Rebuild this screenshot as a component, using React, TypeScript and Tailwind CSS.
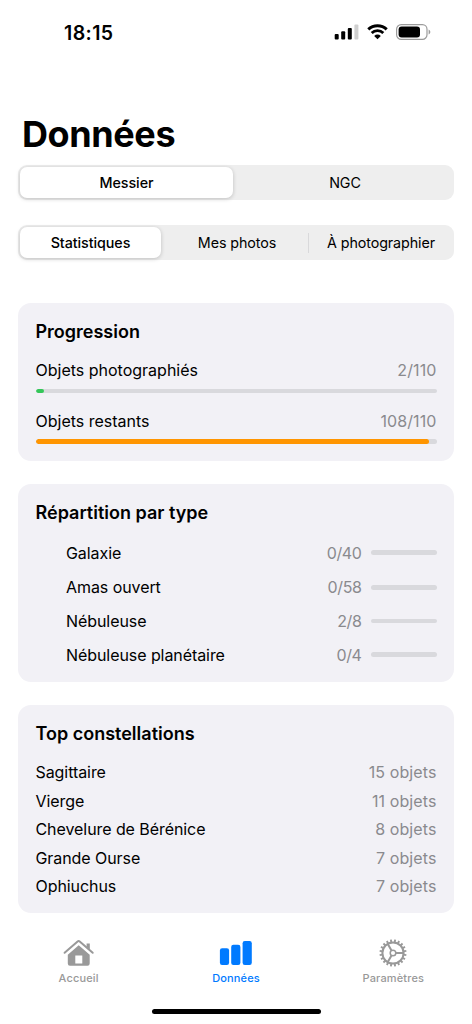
import { useState } from 'react';
import type { ReactNode } from 'react';
import clsx from 'clsx';

const CATALOGS = ['Messier', 'NGC'];

const VIEWS = ['Statistiques', 'Mes photos', 'À photographier'];

const TYPES = [
  { name: 'Galaxie', count: '0/40', row: 'h-[35px]' },
  { name: 'Amas ouvert', count: '0/58', row: 'h-[34.5px]' },
  { name: 'Nébuleuse', count: '2/8', row: 'h-[33px]' },
  { name: 'Nébuleuse planétaire', count: '0/4', row: 'h-[34px]' },
];

const CONSTELLATIONS = [
  { name: 'Sagittaire', total: 15 },
  { name: 'Vierge', total: 11 },
  { name: 'Chevelure de Bérénice', total: 8 },
  { name: 'Grande Ourse', total: 7 },
  { name: 'Ophiuchus', total: 7 },
];

/** 20 gear teeth, one every 18 degrees */
const TEETH = Array.from({ length: 20 }, (_, i) => i * 18);

function SignalIcon() {
  return (
    <svg width="25" height="16" viewBox="0 0 25 16">
      <rect x="0.7" y="9.9" width="4" height="5.6" rx="1" />
      <rect x="7.2" y="7.2" width="4" height="8.3" rx="1" />
      <rect x="13.8" y="4" width="4" height="11.5" rx="1" />
      <rect x="20.4" y="0.5" width="4" height="15" rx="1" fill="#cfcfcf" />
    </svg>
  );
}

function WifiIcon() {
  return (
    <svg width="21" height="16" viewBox="0 0 21 16" fill="none" stroke="black">
      <path d="M1.3 5.4A13.2 13.2 0 0 1 19.7 5.4" strokeWidth="3" />
      <path d="M4.7 9A8.2 8.2 0 0 1 16.3 9" strokeWidth="2.8" />
      <path d="M10.5 15.3 7.2 11.9A4.7 4.7 0 0 1 13.8 11.9Z" fill="black" stroke="none" />
    </svg>
  );
}

function BatteryIcon() {
  return (
    <svg width="35" height="16" viewBox="0 0 35 16">
      <rect x="0.6" y="0.7" width="30.4" height="14.6" rx="4.6" fill="none" stroke="#9b9b9b" strokeWidth="1.2" />
      <rect x="2.6" y="2.6" width="21.4" height="10.8" rx="3" />
      <path d="M32.6 5.5v5c1-.4 1.7-1.4 1.7-2.5s-.7-2.1-1.7-2.5Z" fill="#9b9b9b" />
    </svg>
  );
}

function HouseIcon() {
  return (
    <svg width="32" height="28" viewBox="0 0 32 28" fill="none">
      <path d="M1.6 13.8 14.6 2.4a1.6 1.6 0 0 1 2.1 0L29.7 13.8" stroke="#999" strokeWidth="2" strokeLinecap="round" />
      <path d="M23.6 4.4h3.2v6.2l-3.2-2.8Z" fill="#999" />
      <path
        fillRule="evenodd"
        d="M15.7 6.2 26.7 15.8v8.8a2.2 2.2 0 0 1-2.2 2.2H7a2.2 2.2 0 0 1-2.2-2.2v-8.8ZM12.3 16.5v8h7v-8Z"
        fill="#999"
      />
    </svg>
  );
}

function BarsIcon() {
  return (
    <svg width="33" height="28" viewBox="0 0 33 28" fill="#007aff">
      <rect x="0.9" y="9.3" width="9.2" height="16.7" rx="2.2" />
      <rect x="12.2" y="5.8" width="9.2" height="20.2" rx="2.2" />
      <rect x="23.6" y="2" width="9.2" height="24" rx="2.2" />
    </svg>
  );
}

function GearIcon() {
  return (
    <svg width="28" height="28" viewBox="-14 -14 28 28" fill="none" stroke="#999">
      {TEETH.map((angle) => (
        <path key={angle} d="M10.5 0H13.5" strokeWidth="1.9" transform={`rotate(${angle + 9})`} />
      ))}
      <circle r="10.6" strokeWidth="2" />
      <circle r="2.8" strokeWidth="1.5" />
      <path d="M3 0H10.5M-1.5 -2.6-5.2 -9.1M-1.5 2.6-5.2 9.1" strokeWidth="2" />
    </svg>
  );
}

const TABS = [
  { label: 'Accueil', icon: <HouseIcon />, active: false },
  { label: 'Données', icon: <BarsIcon />, active: true },
  { label: 'Paramètres', icon: <GearIcon />, active: false },
];

function Segmented({ items, className }: { items: string[]; className?: string }) {
  const [selected, setSelected] = useState(0);
  const pillWidth = items.length === 2 ? 'w-[213px]' : 'w-[141px]';

  return (
    <div className={clsx('flex h-[35px] rounded-[9px] bg-[#eeeeee] p-[2px]', className)}>
      {items.map((item, i) => (
        <button
          key={item}
          type="button"
          onClick={() => setSelected(i)}
          className={clsx(
            'relative flex items-center justify-center rounded-[7px] text-[14.3px]',
            i === selected
              ? ['mr-[5px] bg-white font-medium shadow-[0_1px_4px_rgba(0,0,0,0.2)]', pillWidth]
              : 'flex-1 tracking-[-0.1px]',
            i > selected + 1 && 'pl-[2px]',
          )}
        >
          {item}
          {i > selected + 1 && <span className="absolute left-0 h-5 w-px bg-[#d9d9db]" />}
        </button>
      ))}
    </div>
  );
}

function Card({ title, className, children }: { title: string; className?: string; children: ReactNode }) {
  return (
    <section className={clsx('rounded-[13px] bg-[#f2f1f6] px-[17.5px]', className)}>
      <h2 className="pt-[17px] text-[18px] leading-6 font-semibold tracking-normal">{title}</h2>
      {children}
    </section>
  );
}

function ProgressRow({ label, value, total, color }: { label: string; value: number; total: number; color: string }) {
  return (
    <div>
      <div className="flex h-6 items-center justify-between tracking-normal">
        <span>{label}</span>
        <span className="tracking-[0.1px] text-[#8a8a8e]">{value}/{total}</span>
      </div>
      <div className="mt-[6.5px] h-[4.5px] overflow-hidden rounded-full bg-[#d9d9dd]">
        <div className={clsx('h-full min-w-[8.5px] rounded-full', color)} style={{ width: `${(value / total) * 100}%` }} />
      </div>
    </div>
  );
}

export default function App() {
  return (
    <div className="flex h-[1024px] w-[472px] flex-col bg-white font-['Inter',sans-serif] text-[16px] tracking-[-0.07px] text-black">
      <header className="flex h-[64px] items-center justify-between pr-[41px] pl-[64px]">
        <span className="pt-[3px] text-[19.5px] font-semibold tracking-[0.4px]">18:15</span>
        <div className="flex items-center gap-[8px]">
          <SignalIcon />
          <WifiIcon />
          <BatteryIcon />
        </div>
      </header>

      <main className="px-[18px]">
        <h1 className="mt-[48px] pl-1 text-[36px] leading-[44px] font-bold tracking-[-0.4px]">Données</h1>
        <Segmented items={CATALOGS} className="mt-[9px]" />
        <Segmented items={VIEWS} className="mt-[25px]" />

        <Card title="Progression" className="mt-[43px] h-[158px]">
          <div className="mt-[14px] flex flex-col gap-[15.5px]">
            <ProgressRow label="Objets photographiés" value={2} total={110} color="bg-[#34c759]" />
            <ProgressRow label="Objets restants" value={108} total={110} color="bg-[#ff9500]" />
          </div>
        </Card>

        <Card title="Répartition par type" className="mt-[23px] h-[198px]">
          <ul className="mt-[10px]">
            {TYPES.map((type) => (
              <li key={type.name} className={clsx('flex items-center pl-[30.5px]', type.row)}>
                <span className="flex-1">{type.name}</span>
                <span className="mr-[9px] tracking-[-0.4px] text-[#8a8a8e]">{type.count}</span>
                <span className="h-[4.5px] w-[66px] rounded-full bg-[#d9d9dd]" />
              </li>
            ))}
          </ul>
        </Card>

        <Card title="Top constellations" className="mt-[23px] h-[208px]">
          <ul className="mt-[12px]">
            {CONSTELLATIONS.map((c) => (
              <li key={c.name} className="flex h-[28.5px] items-center justify-between">
                <span>{c.name}</span>
                <span className="tracking-[0.1px] text-[#8a8a8e]">{c.total} objets</span>
              </li>
            ))}
          </ul>
        </Card>
      </main>

      <nav className="mt-[26px] grid grid-cols-3">
        {TABS.map((tab) => (
          <button
            key={tab.label}
            type="button"
            className={clsx(
              'flex flex-col items-center text-[11px] leading-[14px] font-medium tracking-[0.15px]',
              tab.active ? 'text-[#007aff]' : 'text-[#999999]',
            )}
          >
            {tab.icon}
            <span className="mt-1">{tab.label}</span>
          </button>
        ))}
      </nav>

      <div className="mx-auto mt-[24px] h-[5px] w-[169px] rounded-full bg-black" />
    </div>
  );
}
